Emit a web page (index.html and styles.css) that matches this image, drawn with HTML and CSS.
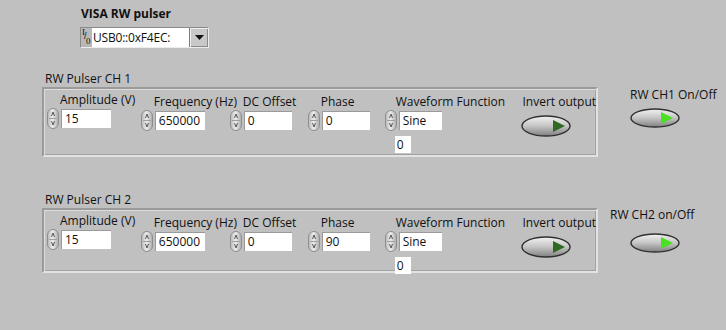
FILE: index.html
```html
<!DOCTYPE html>
<html lang="en">
<head>
    <meta charset="UTF-8">
    <meta name="viewport" content="width=device-width, initial-scale=1.0">
    <title>VISA RW pulser</title>
    <link rel="stylesheet" href="styles.css">
</head>
<body>
    <div class="visa">
        <div class="visa-title">VISA RW pulser</div>
        <div class="visa-ring">
            <span class="io-glyph"><span class="io-i">I</span><span class="io-slash">/</span><span class="io-o">0</span></span>
            <span class="ring-text">USB0::0xF4EC:</span>
            <span class="ring-btn"><svg width="9" height="5" viewBox="0 0 9 5"><polygon points="0,0 9,0 4.5,5" fill="#111"/></svg></span>
        </div>
    </div>

    <!-- channel 1 -->
    <div class="channel ch1">
        <div class="group">
            <div class="group-label">RW Pulser CH 1</div>
            <div class="frame">
                <div class="ctl amp">
                    <div class="ctl-label">Amplitude (V)</div>
                    <div class="ctl-row"><span class="spin"></span><span class="num w50">15</span></div>
                </div>
                <div class="ctl freq low">
                    <div class="ctl-label">Frequency (Hz)</div>
                    <div class="ctl-row"><span class="spin"></span><span class="num w50">650000</span></div>
                </div>
                <div class="ctl dc low">
                    <div class="ctl-label">DC Offset</div>
                    <div class="ctl-row"><span class="spin"></span><span class="num w48">0</span></div>
                </div>
                <div class="ctl phase low">
                    <div class="ctl-label">Phase</div>
                    <div class="ctl-row"><span class="spin"></span><span class="num w48">0</span></div>
                </div>
                <div class="ctl wave low">
                    <div class="ctl-label">Waveform Function</div>
                    <div class="ctl-row"><span class="spin"></span><span class="num w42">Sine</span></div>
                    <span class="num idx">0</span>
                </div>
                <div class="ctl invert low">
                    <div class="ctl-label">Invert output</div>
                    <span class="led off"></span>
                </div>
            </div>
        </div>
        <div class="onoff">
            <div class="ctl-label">RW CH1 On/Off</div>
            <span class="led on"></span>
        </div>
    </div>

    <!-- channel 2 -->
    <div class="channel ch2">
        <div class="group">
            <div class="group-label">RW Pulser CH 2</div>
            <div class="frame">
                <div class="ctl amp">
                    <div class="ctl-label">Amplitude (V)</div>
                    <div class="ctl-row"><span class="spin"></span><span class="num w50">15</span></div>
                </div>
                <div class="ctl freq low">
                    <div class="ctl-label">Frequency (Hz)</div>
                    <div class="ctl-row"><span class="spin"></span><span class="num w50">650000</span></div>
                </div>
                <div class="ctl dc low">
                    <div class="ctl-label">DC Offset</div>
                    <div class="ctl-row"><span class="spin"></span><span class="num w48">0</span></div>
                </div>
                <div class="ctl phase low">
                    <div class="ctl-label">Phase</div>
                    <div class="ctl-row"><span class="spin"></span><span class="num w48">90</span></div>
                </div>
                <div class="ctl wave low">
                    <div class="ctl-label">Waveform Function</div>
                    <div class="ctl-row"><span class="spin"></span><span class="num w42">Sine</span></div>
                    <span class="num idx">0</span>
                </div>
                <div class="ctl invert low">
                    <div class="ctl-label">Invert output</div>
                    <span class="led off"></span>
                </div>
            </div>
        </div>
        <div class="onoff">
            <div class="ctl-label">RW CH2 on/Off</div>
            <span class="led on"></span>
        </div>
    </div>
</body>
</html>
```

FILE: styles.css
```css
body {
    margin: 0;
    background: #c0c0c0;
    font-family: "Open Sans", "Liberation Sans", sans-serif;
    font-size: 12px;
    color: #111;
    width: 726px;
    height: 330px;
    overflow: hidden;
}

/* VISA resource */
.visa {
    padding: 5px 0 0 80px;
}
.visa-title {
    font-weight: bold;
    font-size: 12px;
    line-height: 18px;
    margin-left: 1px;
}
.visa-ring {
    display: flex;
    width: 129px;
    height: 21px;
    margin-top: 4px;
    box-sizing: border-box;
    border: 1px solid;
    border-color: #8a8a8a #ececec #ececec #8a8a8a;
    background: #b8b8b8;
}
.io-glyph {
    position: relative;
    width: 11px;
    font-family: "Liberation Serif", serif;
    font-size: 9px;
    line-height: 9px;
}
.io-i { position: absolute; left: 1px; top: 0; }
.io-slash { position: absolute; left: 3px; top: 4px; font-family: "Liberation Sans", sans-serif; }
.io-o { position: absolute; left: 5px; top: 9px; }
.ring-text {
    flex: 1;
    background: #fff;
    line-height: 19px;
    padding-left: 1px;
    letter-spacing: -0.2px;
}
.ring-btn {
    width: 18px;
    display: flex;
    align-items: center;
    justify-content: center;
    background: #c8c8c8;
    border-left: 1px solid #7c7c7c;
    box-shadow: inset 1px 1px 0 #eee, inset -1px -1px 0 #8a8a8a;
}

/* channel groups */
.channel {
    display: flex;
    padding-left: 42px;
}
.ch1 { margin-top: 23px; }
.ch2 { margin-top: 35px; }
.group-label {
    line-height: 16px;
    padding-left: 3px;
}
.frame {
    display: flex;
    width: 556px;
    box-sizing: border-box;
    border: 2px solid;
    border-color: #9a9a9a #e2e2e2 #e2e2e2 #9a9a9a;
    box-shadow: inset 1px 1px 0 #dcdcdc, inset -1px -1px 0 #a2a2a2;
    padding: 2px 0 0 3px;
}
.ch1 .frame { height: 70px; }
.ch2 .frame { height: 65px; }

.ctl {
    display: flex;
    flex-direction: column;
}
.ctl.low { padding-top: 2px; }
.ctl-label {
    line-height: 17px;
    padding-left: 13px;
    white-space: nowrap;
}
.ctl-row {
    display: flex;
    align-items: center;
}
.amp { width: 94px; }
.freq { width: 89px; }
.dc { width: 78px; }
.phase { width: 77px; }
.wave { width: 137px; }
.wave .ctl-label { padding-left: 11px; }
.invert .ctl-label { padding-left: 1px; }

/* numeric controls */
.spin {
    width: 12px;
    height: 21px;
    box-sizing: border-box;
    border-radius: 6px;
    border: 1px solid #8e8e8e;
    background:
        url("data:image/svg+xml;utf8,<svg xmlns='http://www.w3.org/2000/svg' width='10' height='19'><path d='M3.5 7 L5 3 L6.5 7' fill='none' stroke='%23555' stroke-width='1'/><line x1='1' y1='9.5' x2='9' y2='9.5' stroke='%23a0a0a0'/><path d='M3.5 12 L5 16 L6.5 12' fill='none' stroke='%23555' stroke-width='1'/></svg>") no-repeat center,
        linear-gradient(90deg, #bdbdbd, #ececec 45%, #b0b0b0);
    margin-right: 2px;
}
.num {
    display: block;
    height: 19px;
    box-sizing: border-box;
    background: #fff;
    border-top: 1px solid #9a9a9a;
    border-left: 1px solid #9a9a9a;
    line-height: 18px;
    padding-left: 3px;
}
.w50 { width: 50px; }
.w48 { width: 48px; }
.w42 { width: 43px; }
.idx {
    width: 16px;
    height: 17px;
    margin: 5px 0 0 10px;
    line-height: 17px;
    padding-left: 2px;
    border: none;
}

/* boolean buttons */
.led {
    display: block;
    width: 50px;
    height: 22px;
    background-repeat: no-repeat;
}
.led.off {
    margin-top: 5px;
    background-image: url("data:image/svg+xml;utf8,<svg xmlns='http://www.w3.org/2000/svg' width='50' height='22'><defs><linearGradient id='g' x1='0' y1='0' x2='0' y2='1'><stop offset='0' stop-color='%23f2f2f2'/><stop offset='0.5' stop-color='%23c4c4c4'/><stop offset='1' stop-color='%23808080'/></linearGradient></defs><ellipse cx='25' cy='11' rx='24' ry='10' fill='url(%23g)' stroke='%23303030' stroke-width='1.4'/><polygon points='32,5 44,11 32,17' fill='%232e6a22'/></svg>");
}
.led.on {
    background-image: url("data:image/svg+xml;utf8,<svg xmlns='http://www.w3.org/2000/svg' width='50' height='22'><defs><linearGradient id='g' x1='0' y1='0' x2='0' y2='1'><stop offset='0' stop-color='%23f2f2f2'/><stop offset='0.5' stop-color='%23c4c4c4'/><stop offset='1' stop-color='%23808080'/></linearGradient></defs><ellipse cx='25' cy='10' rx='24' ry='9' fill='url(%23g)' stroke='%23303030' stroke-width='1.4'/><polygon points='31,4 43,10 31,16' fill='%2348e020'/></svg>");
}
.onoff {
    display: flex;
    flex-direction: column;
    align-items: flex-start;
}
.ch1 .onoff { margin: 15px 0 0 32px; }
.ch1 .onoff .led { margin: 5px 0 0 0; }
.ch2 .onoff { margin: 14px 0 0 12px; }
.ch2 .onoff .led { margin: 10px 0 0 20px; }
.onoff .ctl-label { padding-left: 0; }
```
